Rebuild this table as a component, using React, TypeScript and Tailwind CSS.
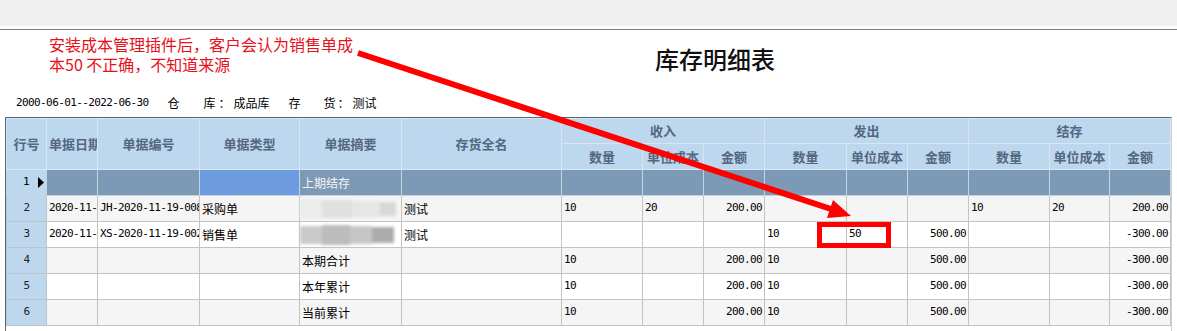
import type { ReactNode } from 'react';

const CJK = "font-['Noto_Sans_CJK_SC',sans-serif]";
const MONO = "font-['DejaVu_Sans_Mono',monospace] text-[11px] tracking-[-0.6px]";

const COL_WIDTHS = [40, 51, 102, 100, 102, 160, 81, 61, 61, 82, 61, 61, 81, 60, 61];

type Row = {
  no: string;
  date?: string;
  code?: string;
  kind?: string;
  summary?: string;
  blur?: 'light' | 'dark';
  item?: string;
  cells: string[];
};

const ROWS: Row[] = [
  { no: '2', date: '2020-11-', code: 'JH-2020-11-19-008', kind: '采购单', blur: 'light', item: '测试', cells: ['10', '20', '200.00', '', '', '', '10', '20', '200.00'] },
  { no: '3', date: '2020-11-', code: 'XS-2020-11-19-002', kind: '销售单', blur: 'dark', item: '测试', cells: ['', '', '', '10', '50', '500.00', '', '', '-300.00'] },
  { no: '4', summary: '本期合计', cells: ['10', '', '200.00', '10', '', '500.00', '', '', '-300.00'] },
  { no: '5', summary: '本年累计', cells: ['10', '', '200.00', '10', '', '500.00', '', '', '-300.00'] },
  { no: '6', summary: '当前累计', cells: ['10', '', '200.00', '10', '', '500.00', '', '', '-300.00'] },
];

function Th({ children, className = '', ...rest }: { children?: ReactNode; className?: string; rowSpan?: number; colSpan?: number }) {
  return (
    <th
      {...rest}
      className={`border border-[#d9e5f0] bg-[#bdd7ee] p-0 text-[13px] font-bold text-[#53677f] ${className}`}
    >
      <div className="overflow-hidden whitespace-nowrap">{children}</div>
    </th>
  );
}

function Td({ children, right, mono }: { children?: ReactNode; right?: boolean; mono?: boolean }) {
  return (
    <td className="border border-[#c3c3c3] p-0">
      <div
        className={`overflow-hidden whitespace-nowrap ${right ? 'pr-[2px] text-right' : 'pl-[2px]'} ${
          mono ? MONO : 'text-[12px]'
        }`}
      >
        {children}
      </div>
    </td>
  );
}

function Blur({ tone }: { tone: 'light' | 'dark' }) {
  return tone === 'light' ? (
    <div className="flex h-[22px] items-center blur-[1.5px]">
      <div className="h-[20px] w-[22px] bg-[#ececec]" />
      <div className="h-[18px] w-[30px] bg-[#e0e0e0]" />
      <div className="h-[16px] w-[28px] bg-[#e6e6e6]" />
      <div className="h-[14px] w-[16px] bg-[#d8d8d8]" />
    </div>
  ) : (
    <div className="flex h-[22px] items-center blur-[1.5px]">
      <div className="h-[18px] w-[22px] bg-[#cacaca]" />
      <div className="h-[20px] w-[28px] bg-[#bcbcbc]" />
      <div className="h-[18px] w-[22px] bg-[#c6c6c6]" />
      <div className="h-[16px] w-[22px] bg-[#acacac]" />
    </div>
  );
}

function StockTable() {
  return (
    <table className={`w-[1165px] table-fixed border-collapse ${CJK}`}>
      <colgroup>
        {COL_WIDTHS.map((w, i) => (
          <col key={i} style={{ width: w }} />
        ))}
      </colgroup>
      <thead>
        <tr className="h-[25px]">
          <Th rowSpan={2}>行号</Th>
          <Th rowSpan={2} className="text-left">
            <span className="pl-[2px]">单据日期</span>
          </Th>
          <Th rowSpan={2}>单据编号</Th>
          <Th rowSpan={2}>单据类型</Th>
          <Th rowSpan={2}>单据摘要</Th>
          <Th rowSpan={2}>存货全名</Th>
          <Th colSpan={3}>收入</Th>
          <Th colSpan={3}>发出</Th>
          <Th colSpan={3}>结存</Th>
        </tr>
        <tr className="h-[26px]">
          {['数量', '单位成本', '金额', '数量', '单位成本', '金额', '数量', '单位成本', '金额'].map((h, i) => (
            <Th key={i}>{h}</Th>
          ))}
        </tr>
      </thead>
      <tbody>
        <tr className="h-[26px] bg-[#7c99b5]">
          <td className="border border-[#c6d2de] bg-[#bdd7ee] p-0">
            <div className="flex items-center justify-end gap-[9px] pr-[2px]">
              <span className={MONO}>1</span>
              {/* current-row marker */}
              <svg width={6} height={11} viewBox="0 0 6 11">
                <polygon points="0,0 6,5.5 0,11" fill="#000" />
              </svg>
            </div>
          </td>
          <td className="border border-[#c6d2de]" />
          <td className="border border-[#c6d2de]" />
          <td className="border border-[#c6d2de] bg-[#6c9be0]" />
          <td className="border border-[#c6d2de] p-0">
            <div className="pl-[2px] text-[12px] text-[#f4f4f4]">上期结存</div>
          </td>
          {Array.from({ length: 10 }).map((_, i) => (
            <td key={i} className="border border-[#c6d2de]" />
          ))}
        </tr>
        {ROWS.map((r, idx) => (
          <tr key={r.no} className={`h-[26px] ${idx % 2 === 0 ? 'bg-[#f5f5f5]' : 'bg-white'}`}>
            <td className="border border-[#c3c3c3] bg-[#bdd7ee] p-0">
              <div className={`text-center ${MONO} text-[#222]`}>{r.no}</div>
            </td>
            <Td mono>{r.date}</Td>
            <Td mono>{r.code}</Td>
            <Td>{r.kind}</Td>
            <td className="border border-[#c3c3c3] p-0">
              {r.blur ? <Blur tone={r.blur} /> : <div className="pl-[2px] text-[12px]">{r.summary}</div>}
            </td>
            <Td>{r.item}</Td>
            {r.cells.map((c, i) => (
              <Td key={i} mono right={i % 3 === 2}>
                {c}
              </Td>
            ))}
          </tr>
        ))}
      </tbody>
    </table>
  );
}

export default function App() {
  return (
    <div className={`relative h-[331px] w-[1177px] overflow-hidden bg-white text-black ${CJK}`}>
      <div className="h-[26px] bg-[#f0f0f0]" />
      <div className="h-[3px]" />
      <div className="h-px bg-[#7d7d7d]" />

      <div className="flex h-[58px]">
        <div className="w-[655px] pl-[49px] pt-[4px] text-[16px] leading-[20px] text-[#e8101a]">
          <div>安装成本管理插件后，客户会认为销售单成</div>
          <div>本50 不正确，不知道来源</div>
        </div>
        <div className="pt-[14px] text-[24px] leading-[30px] font-medium text-[#111]">库存明细表</div>
      </div>

      <div className="flex h-[29px] items-start pl-[16px] pt-[7px] text-[12px] leading-[16px]">
        <span className={MONO}>2000-06-01--2022-06-30</span>
        <span className="ml-[19px]">仓</span>
        <span className="ml-[24px]">库</span>
        <span className="ml-[3px]">：</span>
        <span className="ml-[3px]">成品库</span>
        <span className="ml-[19px]">存</span>
        <span className="ml-[23px]">货</span>
        <span className="ml-[2px]">：</span>
        <span className="ml-[3px]">测试</span>
      </div>

      <div className="ml-[5px] h-[214px] w-[1167px] border-l border-r border-t border-[#56687a] border-r-[#d0d0d0]">
        <StockTable />
      </div>

      {/* annotation overlay: arrow + highlight box */}
      <svg className="pointer-events-none absolute left-0 top-0" width={1177} height={331}>
        <line x1={358} y1={53} x2={834} y2={210} stroke="#ff0000" strokeWidth={6} />
        <polygon points="851,216 827,218 833,200" fill="#ff0000" />
      </svg>
      <div className="pointer-events-none absolute left-[817px] top-[222px] h-[26px] w-[74px] border-[5px] border-[#ff0000]" />
    </div>
  );
}
